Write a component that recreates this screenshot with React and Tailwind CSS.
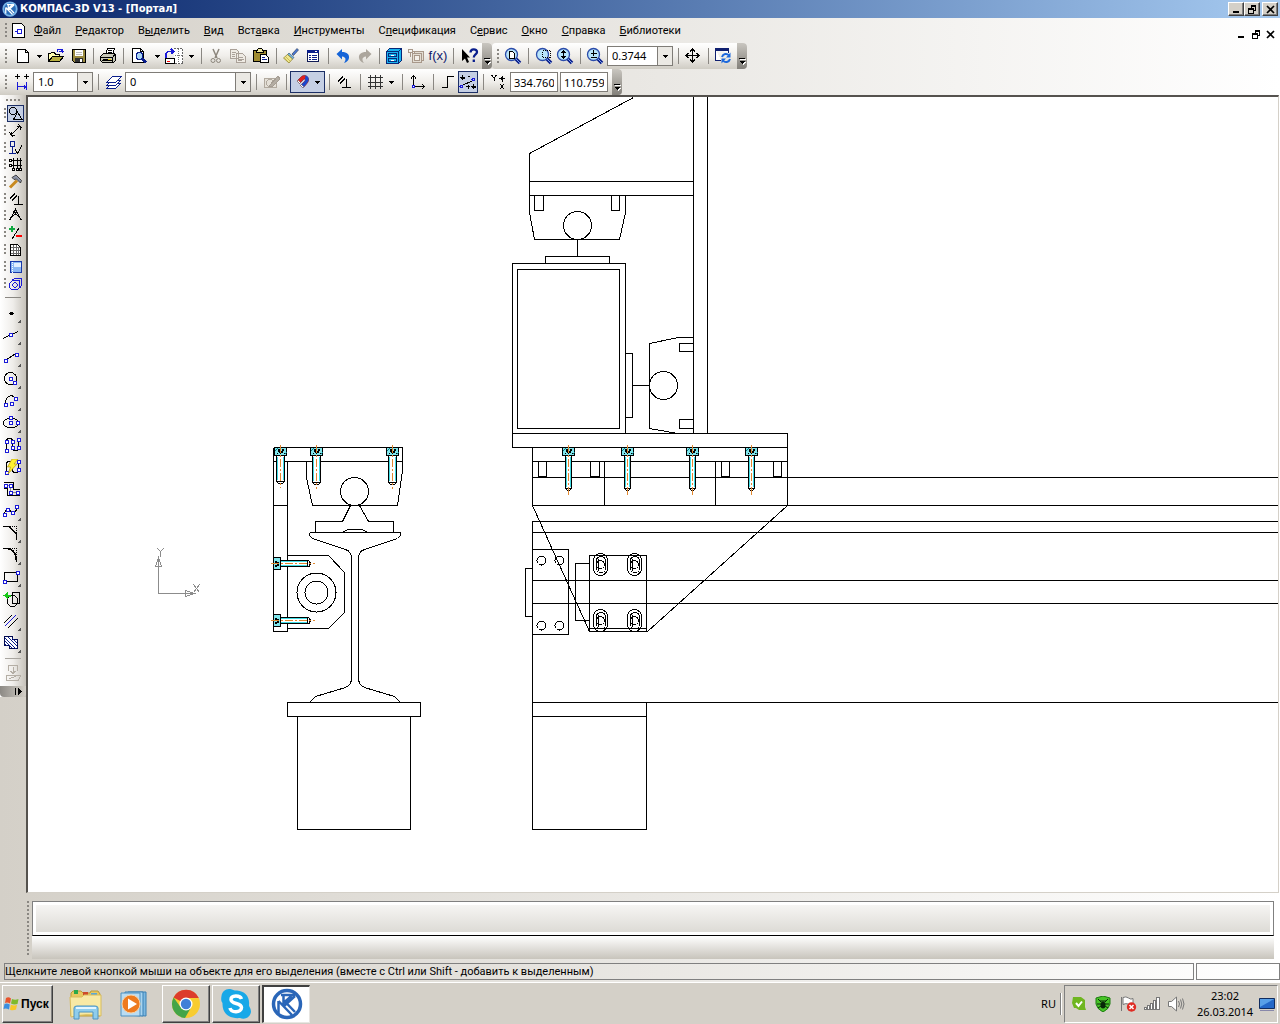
import React from "react";

const NAVY = "#0a1e8c";
const BLUE = "#1a1ad8";

function Ic({ w = 16, h = 16, smooth, children }) {
  return (
    <svg width={w} height={h} viewBox={`0 0 ${w} ${h}`} fill="none" stroke="#000" shapeRendering={smooth ? "auto" : "crispEdges"} aria-hidden="true" className="block shrink-0">
      {children}
    </svg>
  );
}

/* ---------- shared controls ---------- */
function Btn({ label, className = "w-[22px]", children }) {
  return (
    <button type="button" aria-label={label} className={`flex h-[22px] shrink-0 items-center justify-center ${className}`}>
      {children}
    </button>
  );
}
function Sep({ className = "w-2" }) {
  return (
    <span className={`flex shrink-0 justify-center ${className}`}>
      <span className="h-4 w-px bg-[#8a8782]" />
    </span>
  );
}
function Grip() {
  return (
    <span className="flex w-3 shrink-0 justify-center">
      <span className="h-[15px] w-[2px] bg-[repeating-linear-gradient(180deg,#8a8782_0_2px,transparent_2px_4px)]" />
    </span>
  );
}
function Down() {
  return (
    <svg width="5" height="3" viewBox="0 0 5 3" shapeRendering="crispEdges" aria-hidden="true">
      <path d="M0 0H5V1H4V2H3V3H2V2H1V1H0Z" />
    </svg>
  );
}
function Overflow() {
  return (
    <button type="button" aria-label="Параметры панели" className="flex h-[26px] w-[10px] shrink-0 items-end justify-center self-stretch rounded-r-sm bg-linear-to-b from-[#c9c6c0] to-[#83807a] pb-1">
      <svg width="7" height="7" viewBox="0 0 7 7" shapeRendering="crispEdges" aria-hidden="true">
        <path d="M1 1H7V2H1ZM2 4H7V5H6V6H5V7H4V6H3V5H2Z" fill="#fff" />
        <path d="M0 0H6V1H0ZM1 3H6V4H5V5H4V6H3V5H2V4H1Z" />
      </svg>
    </button>
  );
}
function Combo({ label, value, className }) {
  return (
    <span className={`relative flex h-5 shrink-0 ${className}`}>
      <select aria-label={label} defaultValue={value} className="w-full appearance-none border border-[#7f7c77] bg-white pl-1 text-[11px] leading-4 text-black">
        <option>{value}</option>
      </select>
      <span className="pointer-events-none absolute inset-y-0 right-0 flex w-4 items-center justify-center border border-[#7f7c77] bg-[#ebe9e4]">
        <Down />
      </span>
    </span>
  );
}

/* ---------- toolbar icons ---------- */
const NewDoc = () => (<Ic><path d="M2.5 1.5H10.5L13.5 4.5V14.5H2.5ZM10.5 1.5V4.5H13.5" fill="#fff" /></Ic>);
const Open = () => (
  <Ic><path d="M0.5 13.5V5.5H2.5L3.5 4.5H6.5L7.5 6.5H11.5V8.5" fill="#ffffb0" /><path d="M0.5 13.5L4.5 8.5H15.5L11.5 13.5Z" fill="#b8b040" /><path d="M9 3.5C10 0.500 13 0.500 14 3.500M11 3.500H15.500M14.500 1V5" stroke={BLUE} strokeWidth="1.500" /></Ic>
);
const Save = () => (
  <Ic><path d="M1.5 1.5H14.5V14.5H3.5L1.5 12.5Z" fill="#9a8a40" /><path d="M4 2H12V8H4Z" fill="#fff" stroke="none" /><path d="M5 4.5H11M5 6.500H11" stroke="#bbb" /><path d="M4 10H12V14H4Z" fill="#333" stroke="none" /><path d="M9 11H11V14H9Z" fill="#fff" stroke="none" /></Ic>
);
const Print = () => (
  <Ic><path d="M5.5 6.500L7.500 0.500H14.500L12.500 6.500" fill="#fff" /><path d="M8 2.500H12M7.500 4.500H11.500" /><path d="M0.500 8.500L3.500 5.500H14.500L15.500 7.500V12.500L13.500 14.500H2.500L0.500 12.500Z" fill="#c8c8b8" /><path d="M1 9.500H12.500L15 6.500M12.500 9.500V14M2 12.500H12M3 11.500H10" /><path d="M8 11.500H11" stroke="#e8d000" /></Ic>
);
const Preview = () => (
  <Ic><path d="M1.500 0.500H9.500L12.500 3.500V14.500H1.500ZM9.500 0.500V3.500H12.500" fill="#fff" /><circle cx="8.500" cy="8" r="3.500" fill="#a8d4f4" stroke={NAVY} /><path d="M11 10.500L15 14.500" stroke={NAVY} strokeWidth="2.500" /></Ic>
);
const PageMgr = () => (
  <Ic w={18}><path d="M8.500 0.500H17.500V15.500H10" fill="#fff" strokeDasharray="2 1" stroke="#666" /><path d="M13.500 1V15M10 7.500H17" stroke="#777" strokeDasharray="1 1" /><path d="M1 9.500V5.500Q2 3.500 4.500 3.500H8M6 1L8.500 3.500L6 6" stroke={BLUE} strokeWidth="1.500" /><path d="M0.500 10.500H9.500V15.500H0.500Z" fill="#fff" /><path d="M2 13.500H5" stroke="red" /></Ic>
);
const Cut = () => (
  <Ic smooth><path d="M5 1L9 10M11 1L7 10" stroke="#8c867c" strokeWidth="1.500" /><circle cx="5" cy="12.500" r="2" stroke="#8c867c" /><circle cx="10.500" cy="12.500" r="2" stroke="#8c867c" /></Ic>
);
const Copy = () => (
  <Ic><path d="M0.500 1.500H6.500L8.500 3.500V10.500H0.500ZM6.500 5.500H12.500L15.500 8.500V14.500H6.500Z" fill="#efebe4" stroke="#aaa198" /><path d="M2 4.500H6M2 6.500H5M2 8.500H5M8 9.500H13M8 11.500H14M8 12.500H12" stroke="#aaa198" /></Ic>
);
const Paste = () => (
  <Ic><path d="M0.500 2.500H13.500V13.500H0.500Z" fill="#a08c30" /><path d="M3.500 3.500L5.500 0.500H8.500L10.500 3.500V4.500H3.500Z" fill="#eee8a0" /><path d="M7.500 6.500H12.500L15.500 9.500V14.500H7.500Z" fill="#fff" /><path d="M9 9.500H12M9 11.500H14" stroke={NAVY} /></Ic>
);
const Brush = () => (
  <Ic smooth><path d="M9 6L14 0.500L15.500 2L10.500 7.500Z" fill="#4a78d8" stroke="#234" strokeWidth=".6" /><path d="M6 5L11 9.500L9.500 11L4.500 6.500Z" fill="#78b8e0" stroke="#246" strokeWidth=".6" /><path d="M4.500 6.500L9.500 11L6 15L0.500 10Z" fill="#f0e890" stroke="#887820" strokeWidth=".7" /><path d="M2.500 8.500L7 13M1.500 10L5 14" stroke="#b0a030" strokeWidth=".6" /></Ic>
);
const Props = () => (
  <Ic><path d="M2.500 2.500H13.500V13.500H2.500Z" fill="#fff" stroke="#111b55" /><path d="M2 2H14V5H2Z" fill={NAVY} stroke="none" /><path d="M4 7.500H6M7 7.500H12M4 9.500H6M7 9.500H12M4 11.500H6M7 11.500H12" stroke={NAVY} /><path d="M10 3.500H12" stroke="#fff" /></Ic>
);
const Undo = ({ gray }) => (
  <Ic smooth><g transform={gray ? "translate(16 0) scale(-1 1)" : undefined}><path d="M1.500 6L7 1V4C12 4 14.500 6.500 14 10C13.500 12.500 12 14 9 15C11 12.500 11.500 9 7 8.500V11.500Z" fill={gray ? "#aca69d" : "#1464d8"} stroke="none" /></g></Ic>
);
const Library = () => (
  <Ic><path d="M0.500 3.500L3.500 0.500H15.500V12.500L12.500 15.500H0.500Z" fill="#18b4f0" stroke="#082878" /><path d="M0.500 3.500H12.500V15M12.500 3.500L15 1M2.500 5.500H10.500V8.500H2.500ZM2.500 10.500H10.500V13.500H2.500Z" stroke="#082878" /><path d="M5 7H8M5 12H8" stroke="#fff" /></Ic>
);
const Tree = () => (
  <Ic><path d="M6.500 3.500H15.500V12.500H6.500Z" fill="#e3ddd3" stroke="#a8988a" /><path d="M4.500 5.500H13.500V14.500H4.500Z" fill="#e3ddd3" stroke="#a8988a" /><path d="M6.500 7.500H11.500V12.500H6.500Z" fill="#f4f0ea" stroke="#a8988a" /><circle cx="2.500" cy="3" r="2" stroke="#a8988a" /><path d="M4 3.500H6M2.500 5V9" stroke="#a8988a" /></Ic>
);
const Help = () => (
  <svg width="18" height="16" viewBox="0 0 18 16" aria-hidden="true"><path d="M1 1V13L4 10.500L6 15L8 14L6 9.500H9Z" /><path d="M9.500 4.500C9.500 0.500 16 0.500 16 4C16 6.500 12.800 6.500 12.800 9.500M12.800 11.500V14" fill="none" stroke={NAVY} strokeWidth="2.300" /></svg>
);
function Lens({ children }) {
  return (
    <Ic w={18} h={18} smooth><path d="M11 11L16 16" stroke={NAVY} strokeWidth="3.500" /><path d="M12 12L16 16" stroke="#7aa0e8" strokeWidth="1" /><circle cx="7.500" cy="7.500" r="6" fill="#b8e4fa" stroke="#2b4caa" strokeWidth="1.300" /><g shapeRendering="crispEdges">{children}</g></Ic>
  );
}
const Move = () => (
  <Ic><path d="M7.500 1V15M1 7.500H15M5 3.500L7.500 1L10 3.500M5 11.500L7.500 14L10 11.500M3.500 5L1 7.500L3.500 10M11.500 5L14 7.500L11.500 10" /></Ic>
);
const Refresh = () => (
  <Ic><path d="M0.500 0.500H13.500V5M0.500 0.500V12.500H6" stroke="#102070" fill="#fff" /><path d="M0 0H14V3H0Z" fill="#102070" stroke="none" /><g shapeRendering="auto"><path d="M7 9C8 5.500 12 5 14 7.500M15 11C14 14.500 10 15 8 12.500" stroke="#1c68dc" strokeWidth="2" /><path d="M15.500 4.500V9.500H11ZM6.500 15.500V10.500H11Z" fill="#1c68dc" stroke="none" /></g></Ic>
);
const ScaleIcon = () => (
  <Ic w={17}><path d="M1 2.500H6M3.500 0V5M10 2.500H15M12.500 0V5" /><path d="M2 2H5V3H2ZM11 2H14V3H11Z" fill="#000" stroke="none" /><path d="M3.500 8V16M12.500 8V16M4 12.500H12M10 10.500V14.500M11 11.500V13.500" stroke={BLUE} /></Ic>
);
const Layers = () => (
  <Ic w={18}><path d="M1.500 14.500L6.500 9.500H15.500L10.500 14.500Z" fill="#fff" stroke={NAVY} /><path d="M1.500 11.500L6.500 6.500H15.500L10.500 11.500Z" fill="#fff" stroke={NAVY} /><path d="M1.500 8.500L7.500 2.500H16.500L10.500 8.500Z" fill="#fff" stroke={NAVY} /></Ic>
);
const EditGray = () => (
  <Ic><path d="M0.500 4.500H12.500V13.500H0.500Z" fill="#e5e0d7" stroke="#b1a99e" /><circle cx="6" cy="9" r="3.500" stroke="#b1a99e" /><path d="M5 12L14 2L16 5L8 13Z" fill="#b4ada3" stroke="#a49c92" /></Ic>
);
const Magnet = () => (
  <Ic smooth><path d="M2 7L6.500 2.500C9 0 14 2 13.500 6C13.500 8 12 9.500 8 14L5.500 11.500L10 7C11 5.500 10 4.500 8.500 5.500L4.500 9.500Z" fill="#e02020" stroke="#600" strokeWidth=".5" /><path d="M10.500 1.500C13 2 14 4 13.500 6.500C13 8 11 10.500 8 14L5.500 11.500L10 7C10.500 6 10.500 5.500 10 5Z" fill="#1848d0" stroke="none" /><path d="M2 7L4.500 9.500L5.500 8.500L3 6ZM5.500 11.500L8 14L9 13L6.500 10.500Z" fill="#fff" stroke="#444" strokeWidth=".4" /></Ic>
);
const Perp = () => (
  <Ic><path d="M2 7.500L7 2.500M4 9.500L9 4.500M10.500 5V13.500M6 13.500H15" /></Ic>
);
const GridIcon = () => (<Ic><path d="M3.500 1V15M8.500 1V15M13.500 1V15M1 3.500H16M1 8.500H16M1 12.500H16" stroke="#333" /></Ic>);
const Axes = () => (<Ic><path d="M3.500 2V12.500H14M1 4.500L3.500 1.500L6 4.500M12 10L14.500 12.500L12 15" /><path d="M2.500 11.500H4.500V13.500H2.500Z" fill="#fff" stroke={BLUE} /></Ic>);
const Step = () => (<Ic><path d="M2 13.500H7.500V2.500H14" /></Ic>);
const SnapIcon = () => (
  <Ic w={18}><path d="M1 3.500H6M3.500 1V6M3 11.500L14 6.500M12 12.500H17M14.500 10V15M7 12.500H11M9 10.500V14.500M9 2.500H11" /><circle cx="2.500" cy="12.500" r="1.500" stroke={BLUE} /><circle cx="14.500" cy="5.500" r="1.500" stroke={BLUE} /><path d="M2 3H5V4H2ZM13 12H16V13H13Z" fill="#000" /></Ic>
);
const YX = () => (
  <Ic><path d="M0.500 1L3 4M5.500 1L3 4M3 4V7M8 4.500H14M11 1.500V7.500M9 10L13 15M13 10L9 15" /><circle cx="11" cy="4.500" r="1.200" fill="#000" /></Ic>
);

/* ---------- left palette ---------- */
const Sq = ({ x, y }) => <rect x={x - 1} y={y - 1} width="3" height="3" fill="#fff" stroke={BLUE} transform="translate(-.5 -.5)" />;
const topTools = [
  ["Геометрия", <><circle cx="5" cy="5" r="3.500" /><path d="M9.500 6L14 13.500H5.500Z" /></>],
  ["Размеры", <><path d="M3 12L12 3M3 9V12.500H6.500M8.500 3H12.500V6.500M1 9L5 14M10 1L14 5" /></>],
  ["Обозначения", <><path d="M2.500 1.500H6.500V6.500H2.500ZM4.500 7V13M1 13.500H8" stroke={NAVY} /><path d="M7 9.500L9.500 13.500L14 5.500" /></>],
  ["Обозначения для строительства", <><path d="M5.500 1V11M9.500 1V11M12.500 1V11M3 3.500H14M3 8.500H14" /><path d="M1.500 2.500H3.500V4.500H1.500ZM1.500 7.500H3.500V9.500H1.500ZM4.500 11.500H6.500V13.500H4.500ZM8.500 11.500H10.500V13.500H8.500ZM11.500 11.500H13.500V13.500H11.500Z" fill="#fff" /></>],
  ["Редактирование", <g shapeRendering="auto"><path d="M2 13.500L9 6.500" stroke="#c88a20" strokeWidth="3" /><path d="M4 3.500L8 1L13.500 6.500L12.500 9L8.500 5L6 5.500Z" fill="#8d94a8" stroke="#222" strokeWidth=".8" /></g>],
  ["Параметризация", <path d="M2 7.500L7 2.500M4 9.500L9 4.500M10.500 5V13.500M6 13.500H15" />],
  ["Измерения", <><path d="M6.500 3L1.500 12.500M8.500 3L13.500 12.500M7.500 0V3M3 9L7.500 6L12 9" /><circle cx="7.500" cy="3.500" r="1.500" /></>],
  ["Выделение", <><path d="M1 4H7M4 1V7" stroke="#10a840" strokeWidth="2" /><path d="M4 14L11 3" /><path d="M8 11H14" stroke="red" strokeWidth="2" /></>],
  ["Ассоциативные виды", <><path d="M2.500 2.500H9.500L12.500 5.500V13.500H2.500Z" fill="#fff" /><path d="M5.500 3V13M8.500 3V13M10.500 5V13M3 5.500H12M3 8.500H12M3 11.500H12" stroke="#666" /></>],
  ["Спецификация", <><path d="M2.500 2.500H13.500V13.500H2.500Z" fill="#8cb8f4" stroke="#1838a8" /><path d="M6 4H13V8H6Z" fill="#e4f0fe" stroke="none" /><path d="M4.500 3V14" stroke="#fff" strokeDasharray="1 1" /></>],
  ["Отчеты", <><path d="M4 4.500L6.500 2.500H13.500V9.500L12 11.500M1.500 11.500V7.500L4.500 4.500H11.500V11.500L9.500 13.500H3.500Z" stroke={BLUE} /><circle cx="7" cy="9" r="2.200" stroke={BLUE} /></>],
];
const lowTools = [
  ["Точка", 1, <path d="M7 7H10V8H11V9H10V10H7V9H6V8H7Z" fill="#000" stroke="none" />],
  ["Вспомогательная прямая", 1, <><path d="M0 11.500L15 4.500" /><Sq x={7.5} y={8} /></>],
  ["Отрезок", 1, <><path d="M2 11.500L13 4.500" /><Sq x={2.5} y={11.5} /><Sq x={13.5} y={5.5} /></>],
  ["Окружность", 1, <><circle cx="7.500" cy="7.500" r="6" /><Sq x={8} y={8} /><Sq x={12} y={12} /></>],
  ["Дуга", 1, <><path d="M2.500 11C2 3 9 0 13 6" /><Sq x={2.5} y={11.5} /><Sq x={8.5} y={10.5} /><Sq x={13} y={5.5} /></>],
  ["Эллипс", 1, <><ellipse cx="8" cy="8" rx="7.500" ry="5" /><Sq x={8} y={8} /><Sq x={8} y={3} /><Sq x={14.500} y={8} /></>],
  ["Непрерывный ввод объектов", 0, <><path d="M3.500 13V3.500C4 0.500 9 0.500 9.500 4V11C10 14.500 15 14.500 15.500 11V3" /><Sq x={4} y={14} /><Sq x={4} y={5} /><Sq x={10} y={5} /><Sq x={16} y={3} /><Sq x={10} y={11} /><Sq x={16} y={11} /></>],
  ["Линия", 0, <><path d="M3.500 13V4.500C4 1.500 9 1.500 9.500 5V11C10 14.500 15 14.500 15.500 11V3" /><Sq x={4} y={14} /><Sq x={16} y={3} /><Sq x={16} y={11} /><g shapeRendering="auto"><path d="M9 0H15L11 5H14L5 15L7.500 8H4.500Z" fill="#fff030" stroke="#b89800" strokeWidth=".7" /></g></>],
  ["Мультилиния", 0, <><path d="M1 1.500H10.500V8.500H17M1 7.500H4.500V14.500H17" /><path d="M2 4.500H7.500V11.500H16" stroke="#888" /><Sq x={3} y={5} /><Sq x={8} y={5} /><Sq x={8} y={12} /><Sq x={15} y={12} /></>],
  ["Кривая", 1, <><path d="M1.500 13C2 4 6 4 8 9C11 12 14 8 14 3" /><Sq x={2} y={12} /><Sq x={5} y={7} /><Sq x={10} y={10} /><Sq x={14} y={4} /></>],
  ["Фаска", 1, <><path d="M0 1.500H6L13.500 9V15" strokeWidth="1.500" /><path d="M7 1.500H13.500V9" strokeDasharray="1 1" /></>],
  ["Скругление", 1, <><path d="M0 1.500H4C10 2 13.500 6 13.500 15" strokeWidth="1.500" /><path d="M7 1.500H13.500V9" strokeDasharray="1 1" /></>],
  ["Прямоугольник", 1, <><path d="M1.500 3.500H14.500V12.500H1.500Z" /><Sq x={2} y={13} /><Sq x={15} y={4} /></>],
  ["Собрать контур", 0, <><path d="M9.500 1.500H16.500V12.500H9.500Z" /><circle cx="9.500" cy="10" r="5.500" /><path d="M2 4.500H8M5 2L2 4.500L5 7" stroke="#18c818" strokeWidth="2" /></>],
  ["Эквидистанта", 1, <><path d="M1 10L9 2M5 15L15 5" /><path d="M2 13L13 2" stroke={BLUE} /></>],
  ["Штриховка", 1, <><path d="M1.500 1.500H9.500V4.500H14.500V13.500H6.500V10.500H1.500Z" fill="#fff" stroke="#000850" strokeWidth="1.500" /><path d="M2 3L13 14M2 6L9 13M5 2L14 11M9 3L14 8M2 9L4 11" stroke={NAVY} /></>],
];

/* ---------- drawing ---------- */
function VBolt({ x, len, half = 4 }) {
  return (
    <g transform={`translate(${x} 447)`}>
      <rect x="-6" y="0" width="12" height="8" fill="#7fe6ec" />
      <path d="M-6 4L-3 1M4 7L6 5" stroke="#087a84" />
      <path d="M-2 1V4L0 6L2 4V1M-3 6H-4M3 6H4M-4 8H4" strokeWidth="1" />
      <path d="M-3 2H-1M1 2H3M-2 4H2" strokeWidth="2" />
      <path d={`M${-half} 8V${len - 2}L${-half + 2} ${len}H${half - 2}L${half} ${len - 2}V8`} fill="#fff" />
      <rect x={-half + 0.5} y="9.500" width="1" height={len - 13} fill="#3fdde4" stroke="none" />
      <rect x={half - 1.5} y="9.500" width="1" height={len - 13} fill="#3fdde4" stroke="none" />
      <path d={`M${-half} ${len - 2}H${half}`} />
      <path d={`M0 -3V${len + 4}`} stroke="#e08830" strokeDasharray="8 2 2 2" />
    </g>
  );
}
function HBolt({ y }) {
  return (
    <g transform={`translate(273 ${y})`}>
      <rect x="0" y="-6" width="7" height="12" fill="#7fe6ec" />
      <path d="M1 -2H3L5 0L3 2H1" />
      <path d="M2 -3V-1M2 1V3M4 -2V2" strokeWidth="2" />
      <path d="M7 -3H35L37 -1V1L35 3H7Z" fill="#fff" />
      <rect x="7.500" y="-2.500" width="26" height="1" fill="#3fdde4" stroke="none" />
      <rect x="7.500" y="1.500" width="26" height="1" fill="#3fdde4" stroke="none" />
      <path d="M34 -3V3M36 -3V3" />
      <path d="M-3 0H41" stroke="#e08830" strokeDasharray="8 2 2 2" />
    </g>
  );
}
function Slot({ x, y }) {
  return (
    <g>
      <rect x={x - 7} y={y - 11} width="14" height="22" rx="7" />
      <rect x={x - 4} y={y - 8} width="9" height="16" rx="4" />
      <circle cx={x} cy={y} r="4" />
      <path d={`M${x - 2} ${y - 6}V${y + 6}`} />
    </g>
  );
}
const outlines = [
  // gantry post and upper bracket
  "M633 97L529 153V212L534 239H619L625 212V195M529 181H693M529 195H693M693 90V433M707 90V433",
  "M534 195V210H543V195M611 195V210H619V195M577 239V256M545 263V256H609V263",
  "M512 263H625V433H512ZM517 269H619V428H517ZM625 353H632V417H625M632 385H649",
  "M693 337H678L649 343V428L677 433M693 343H679V351H693M693 419H679V428H693",
  // carriage
  "M512 433H787V447H512ZM532 447V505H787V447M532 461H787M532 477H4000M787 505H4000M604 461V505M715 461V505",
  "M538 461V476H546V461M590 461V476H599V461M721 461V476H729V461M773 461V476H781V461",
  "M532 505L589 631H647L787 505",
  // beam
  "M4000 521H532V829H646V702M532 532H4000M532 580H4000M532 603H4000M532 702H4000M532 716H646",
  "M532 549H568V634H532M532 568H525V616H532M589 563H575V620H589M589 631V555H646V631M589 628H646",
  // rail section
  "M273 447H402V470L397 505H312L306 477V461M273 461H402M273 447V631H287V461M273 505H287",
  "M350 505L342 521H315V532M359 505L368 521H393V532M342 532L347 529H362L367 532",
  "M309 532H400V535L397 538L364 549Q358 551 358 558V678Q358 684 364 687L394 696L400 702M309 532V535L312 538L345 549Q351 551 351 558V678Q351 684 345 687L315 696L309 702",
  "M287 702H420V716H287ZM297 716V829H410V716",
  "M287 555H328L344 572V612L328 628H287",
];
function Drawing() {
  return (
    <svg role="img" aria-label="Чертёж портала" className="min-h-[740px] w-full flex-1 bg-white" fill="none" stroke="#000" shapeRendering="crispEdges">
      <g transform="translate(-27.5 -96.5)">
        {outlines.map((d) => <path key={d} d={d} />)}
        <circle cx="577" cy="225" r="14" />
        <circle cx="663" cy="385" r="14" />
        <circle cx="354" cy="491" r="14" />
        <circle cx="316" cy="592" r="19.500" />
        <circle cx="316" cy="592" r="11.500" />
        {[[541, 560], [559, 560], [541, 625], [559, 625]].map(([x, y]) => <circle key={x + "-" + y} cx={x} cy={y} r="4.500" />)}
        {[[600, 564], [634, 564], [600, 620], [634, 620]].map(([x, y]) => <Slot key={x + "-" + y} x={x} y={y} />)}
        <VBolt x={280} len={36} />
        <VBolt x={316} len={37} />
        <VBolt x={392} len={37} />
        {[568, 627, 692, 751].map((x) => <VBolt key={x} x={x} len={43} half={3} />)}
        <HBolt y={563} />
        <HBolt y={620} />
        <g stroke="#8c8c8c">
          <path d="M158 557V593H194M158 557L155 566H161ZM194 593L185 590V596Z" />
          <path d="M157 548L160 551L163 548M160 551V556M193 584L199 592M199 584L193 592" />
        </g>
      </g>
    </svg>
  );
}

/* ---------- logos ---------- */
function Kompas({ size, ring = "#2a66b8", bg = "none", ink = "#2a66b8" }) {
  return (
    <svg width={size} height={size} viewBox="0 0 32 32" aria-hidden="true" className="block shrink-0">
      <circle cx="16" cy="16" r="13.500" fill={bg} stroke={ring} strokeWidth="3.500" />
      <path d="M10 7H24M12.500 7V17M20.500 8L14 13.500L24 24M7.500 13V25M7.500 13L21 27M13 18L24 8" fill="none" stroke={ink} strokeWidth="2.500" />
    </svg>
  );
}
const WinFlag = () => (
  <svg width="16" height="16" viewBox="0 0 16 16" aria-hidden="true">
    <path d="M3 2Q5.500 0.500 8 2.500L7 7.500Q4.500 6 2 7Z" fill="#e8542c" /><path d="M9 3Q12 4.500 15.500 3L14.500 8Q11 9 8 7.500Z" fill="#7fba2c" />
    <path d="M1.500 8Q4 7 6.800 8.500L6 13.500Q3 12 0.500 13Z" fill="#3a8ee0" /><path d="M7.800 8.800Q11 10 14 9L13 13.500Q10 15 7 13.800Z" fill="#f8c828" />
  </svg>
);
const Explorer = () => (
  <svg width="34" height="32" viewBox="0 0 34 32" aria-hidden="true">
    <path d="M2 5L4 3H12L14 5H21L22 3H29L31 6V28H2Z" fill="#e9c860" stroke="#b99a3a" /><path d="M5 2H9V6H5Z" fill="#2ba84a" /><path d="M14 4H19V7H14Z" fill="#cf4a2a" /><path d="M22 5H28V8H22Z" fill="#5aa8d8" />
    <path d="M1 9H13L15 7H32V28Q17 25 2 29Z" fill="#f8e9a4" stroke="#d8bc5c" /><path d="M5 31V20Q5 18 8 18H26Q29 18 29 20V31H24V24H10V31Z" fill="#8fcdec" stroke="#4c94c4" /><path d="M7 20H27" stroke="#e4f6ff" strokeWidth="2" />
  </svg>
);
const Player = () => (
  <svg width="30" height="28" viewBox="0 0 30 28" aria-hidden="true">
    <path d="M8 2H26V26L8 25Z" fill="#7db8e0" stroke="#3a80b4" /><path d="M5 2H23V26L5 25Z" fill="#a8d4f0" stroke="#3a80b4" /><path d="M1 3H20V26H1Z" fill="#b9dcf2" stroke="#4c90c0" />
    <circle cx="11" cy="14" r="9" fill="#ee7a1e" stroke="#fbd0a0" /><path d="M8 8.500L17 14L8 19.500Z" fill="#fff" />
  </svg>
);
const Chrome = () => (
  <svg width="30" height="30" viewBox="0 0 30 30" aria-hidden="true">
    <circle cx="15" cy="15" r="14" fill="#f8cc30" /><path d="M15 15L2.500 8.500A14 14 0 0 1 27.800 9H15Z" fill="#dc3c2c" /><path d="M2.600 8.500A14 14 0 0 0 14 29L20 18.500L9.500 18Z" fill="#44a548" />
    <circle cx="15" cy="15" r="6.500" fill="#fff" /><circle cx="15" cy="15" r="5.200" fill="#3f7fd8" />
  </svg>
);
const Skype = () => (
  <svg width="32" height="32" viewBox="0 0 32 32" aria-hidden="true">
    <path d="M9 1C13 1 13 3 17 2.500C25 3 30 9 29 17C29 19 31 20 31 24C30 30 24 32 20 30C10 31 2 26 2.500 15C1 13 1 11 1.500 8C2 4 5 1 9 1Z" fill="#18a8e8" />
    <path d="M21.500 11C20 7 11 7 11 11.500C11 16.500 21.500 14.500 21.500 19.500C21.500 25 11 25 10 20" fill="none" stroke="#fff" strokeWidth="3.500" />
  </svg>
);

const menus = [
  ["", "Ф", "айл"], ["", "Р", "едактор"], ["В", "ы", "делить"], ["", "В", "ид"], ["Вст", "а", "вка"], ["", "И", "нструменты"],
  ["С", "п", "ецификация"], ["С", "е", "рвис"], ["", "О", "кно"], ["", "С", "правка"], ["", "Б", "иблиотеки"],
];

const MinG = () => <Ic w={9} h={9}><path d="M1 7H7" strokeWidth="2" /></Ic>;
const RestG = () => <Ic w={9} h={9}><path d="M3 1H8M3.500 2V3M7.500 1V5.500H6M0 4H6M0.500 4V8.500H5.500V4" /><path d="M3 0.500H8M0 3.500H6" /></Ic>;
const CloseG = () => <Ic w={9} h={9} smooth><path d="M1 1L8 8M8 1L1 8" strokeWidth="1.700" /></Ic>;

const raised = "border border-t-white border-l-white border-r-[#404040] border-b-[#404040] shadow-[inset_-1px_-1px_0_#808080]";

export default function App() {
  return (
    <div className="flex min-h-screen flex-col bg-linear-to-r from-[#d4d0c8] to-white font-['Noto_Sans','Liberation_Sans',sans-serif] text-[11px] leading-4 text-black">
      <header className="flex h-[18px] items-center bg-linear-to-r from-[#0a246a] to-[#a6caf0] pr-[2px] pl-[2px]">
        <Kompas size={16} ring="#78b4e8" bg="#2a6cb8" ink="#fff" />
        <h1 className="ml-[2px] flex-1 truncate font-['DejaVu_Sans',sans-serif] text-[10px] font-bold text-white">КОМПАС-3D V13 - [Портал]</h1>
        <button type="button" aria-label="Свернуть" className={`flex h-[14px] w-4 items-center justify-center bg-[#d4d0c8] ${raised}`}><MinG /></button>
        <button type="button" aria-label="Восстановить" className={`flex h-[14px] w-4 items-center justify-center bg-[#d4d0c8] ${raised}`}><RestG /></button>
        <button type="button" aria-label="Закрыть" className={`ml-[2px] flex h-[14px] w-4 items-center justify-center bg-[#d4d0c8] ${raised}`}><CloseG /></button>
      </header>

      <nav aria-label="Меню" className="flex h-[25px] items-center pr-1">
        <Grip />
        <Ic w={13} h={15}><path d="M0.500 0.500H9.500L12.500 3.500V14.500H0.500Z" fill="#fff" /><path d="M3 8.500H5M5.500 6.500H9.500V10.500H5.500Z" stroke={BLUE} /></Ic>
        <div className="ml-[2px] flex flex-1 font-['Roboto','Liberation_Sans',sans-serif]">
          {menus.map(([a, u, b]) => (
            <button type="button" key={a + u + b} className="px-[7px]">{a}<span className="underline">{u}</span>{b}</button>
          ))}
        </div>
        <button type="button" aria-label="Свернуть документ" className="flex w-[14px] justify-center pt-2"><MinG /></button>
        <button type="button" aria-label="Восстановить документ" className="flex w-[16px] justify-center pt-2"><RestG /></button>
        <button type="button" aria-label="Закрыть документ" className="flex w-[12px] justify-center pt-2"><CloseG /></button>
      </nav>

      <div className="flex h-[26px]">
        <div className="flex items-center rounded-r-sm bg-linear-to-b from-white via-[#f0eeea] to-[#cfccc4]">
          <Grip />
          <Btn label="Создать"><NewDoc /></Btn>
          <Btn label="Варианты создания" className="w-[10px]"><Down /></Btn>
          <Btn label="Открыть" className="w-[23px]"><Open /></Btn>
          <Btn label="Сохранить" className="w-[23px]"><Save /></Btn>
          <Sep className="w-[6px]" />
          <Btn label="Печать" className="w-6"><Print /></Btn>
          <Sep className="w-[6px]" />
          <Btn label="Предварительный просмотр" className="w-[26px]"><Preview /></Btn>
          <Btn label="Варианты просмотра" className="w-[10px]"><Down /></Btn>
          <Btn label="Менеджер документа" className="w-6"><PageMgr /></Btn>
          <Btn label="Варианты менеджера" className="w-[10px]"><Down /></Btn>
          <Sep className="w-[10px]" />
          <Btn label="Вырезать" className="w-5"><Cut /></Btn>
          <Btn label="Копировать" className="w-6"><Copy /></Btn>
          <Btn label="Вставить"><Paste /></Btn>
          <Sep />
          <Btn label="Копировать свойства"><Brush /></Btn>
          <Btn label="Свойства"><Props /></Btn>
          <Sep />
          <Btn label="Отменить"><Undo /></Btn>
          <Btn label="Повторить" className="w-[21px]"><Undo gray /></Btn>
          <Sep />
          <Btn label="Менеджер библиотек"><Library /></Btn>
          <Btn label="Дерево"><Tree /></Btn>
          <Btn label="Переменные" className="w-[22px] font-['Liberation_Sans',sans-serif] text-[13px] text-[#10206c]">f(x)</Btn>
          <Sep />
          <Btn label="Справка" className="w-[25px]"><Help /></Btn>
          <Overflow />
        </div>
        <div className="flex items-center rounded-sm bg-linear-to-b from-white via-[#f0eeea] to-[#cfccc4]">
          <Grip />
          <Btn label="Показать все" className="w-[18px]"><Lens><path d="M5.500 4.500H8.500L10.500 6.500V11.500H5.500Z" fill="#fff" /></Lens></Btn>
          <Sep className="w-3" />
          <Btn label="Увеличить рамкой" className="w-[20px]"><Lens><path d="M7.500 3.500H15.500V10.500H7.500Z" strokeDasharray="1 1" /></Lens></Btn>
          <Btn label="Масштаб динамически"><Lens><path d="M7.500 3V12M6 4.500H9M6 10.500H9M5 5.500H10M5 9.500H10" /></Lens></Btn>
          <Sep />
          <Btn label="Изменить масштаб" className="mr-[2px] w-[21px]"><Lens><path d="M7.500 3V9M4.500 6H10.500M4.500 10.500H10.500" /></Lens></Btn>
          <Combo label="Масштаб" value="0.3744" className="w-[66px]" />
          <Sep className="w-[10px]" />
          <Btn label="Сдвинуть" className="w-[19px]"><Move /></Btn>
          <Sep className="w-3" />
          <Btn label="Обновить" className="mr-[5px] w-[18px]"><Refresh /></Btn>
          <Overflow />
        </div>
      </div>

      <div className="flex h-[26px]">
        <div className="flex h-[26px] items-center rounded-r-sm bg-linear-to-b from-white via-[#f0eeea] to-[#cfccc4]">
          <Grip />
          <Btn label="Шаг курсора" className="w-[21px]"><ScaleIcon /></Btn>
          <Combo label="Текущий шаг" value="1.0" className="w-[60px]" />
          <Sep className="w-[10px]" />
          <Btn label="Слои"><Layers /></Btn>
          <Combo label="Текущий слой" value="0" className="w-[126px]" />
          <Sep className="w-[10px]" />
          <Btn label="Редактировать" className="w-[21px]"><EditGray /></Btn>
          <Sep />
          <Btn label="Привязки" className="w-[35px] gap-1 border border-[#1c2f66] bg-[#c5cfe4]"><Magnet /><Down /></Btn>
          <Sep />
          <Btn label="Ортогональность"><Perp /></Btn>
          <Sep className="w-[10px]" />
          <Btn label="Сетка" className="w-5"><GridIcon /></Btn>
          <Btn label="Варианты сетки" className="w-3"><Down /></Btn>
          <Sep className="w-[10px]" />
          <Btn label="Система координат"><Axes /></Btn>
          <Sep />
          <Btn label="Ортогональное черчение" className="w-[21px]"><Step /></Btn>
          <Btn label="Округление" className="border border-[#1c2f66] bg-[#c5cfe4]"><SnapIcon /></Btn>
          <Sep className="w-[10px]" />
          <span className="flex w-[22px] justify-center"><YX /></span>
          <input aria-label="Координата X" defaultValue="334.7603" className="h-5 w-12 border border-[#7f7c77] bg-white px-[3px]" />
          <input aria-label="Координата Y" defaultValue="110.7590" className="mr-1 ml-[2px] h-5 w-12 border border-[#7f7c77] bg-white px-[3px]" />
          <Overflow />
        </div>
      </div>

      <main className="flex flex-1">
        <aside aria-label="Компактная панель" className="w-[26px] shrink-0">
          <div className="flex flex-col bg-linear-to-r from-white via-[#efedea] to-[#c6c2ba]">
            <span className="mx-auto mt-1 mb-1 h-[2px] w-[15px] bg-[repeating-linear-gradient(90deg,#8a8782_0_2px,transparent_2px_4px)]" />
            {topTools.map(([label, art], i) => (
              <div key={label} className="flex h-[17px] items-center">
                <span className="mr-[1px] ml-[4px] h-[11px] w-[2px] shrink-0 bg-[repeating-linear-gradient(180deg,#8a8782_0_2px,transparent_2px_4px)]" />
                <button type="button" aria-label={label} className={i === 0 ? "flex h-[17px] w-[17px] items-center justify-center border border-[#1c2f66] bg-[#c5cfe4]" : "flex h-[17px] w-[17px] items-center justify-center"}>
                  <Ic w={15} h={15}>{art}</Ic>
                </button>
              </div>
            ))}
            <span className="mx-[5px] my-[5px] h-px bg-[#8a8782]" />
            {lowTools.map(([label, more, art]) => (
              <button type="button" key={label} aria-label={label} className="flex h-[22px] items-center pl-[3px]">
                <Ic w={19} h={18}>{art}{more ? <path d="M18 14V18H14Z" fill="#555" stroke="none" /> : null}</Ic>
              </button>
            ))}
            <span className="mx-[5px] my-[3px] h-px bg-[#a8a59f]" />
            <button type="button" aria-label="Вид" className="flex h-[22px] items-center pl-[5px]">
              <Ic w={17} h={18}><path d="M3.500 7V1.500H12.500V7M8 3V9M5.500 7L8 9.500L10.500 7M1.500 11.500H15.500L13.500 16.500H1.500ZM4 14.500L11 12.500" stroke="#b4aea5" /></Ic>
            </button>
            <button type="button" aria-label="Параметры компактной панели" className="mt-[2px] flex h-[11px] items-center justify-end rounded-b-sm bg-linear-to-r from-[#8c8984] to-[#d4d0c8] pr-1">
              <svg width="7" height="7" viewBox="0 0 7 7" shapeRendering="crispEdges" aria-hidden="true"><path d="M0 0H1V7H0ZM3 0H4V1H5V2H6V3H7V4H6V5H5V6H4V7H3Z" /></svg>
            </button>
          </div>
        </aside>
        <section className="mr-px flex flex-1 border-t-[2px] border-r border-b border-l-[2px] border-t-[#55524e] border-r-[#d4d0c8] border-b-[#d4d0c8] border-l-[#55524e]">
          <Drawing />
        </section>
      </main>

      <section aria-label="Панель свойств" className="mt-2 mr-[6px] ml-[27px] flex h-[58px]">
        <span className="mr-[3px] h-[55px] w-[2px] bg-[repeating-linear-gradient(180deg,#8a8782_0_2px,transparent_2px_4px)]" />
        <div className="flex-1">
          <div className="h-[35px] border border-[#808080] border-b-black bg-white p-[3px]">
            <div className="h-full bg-linear-to-b from-[#f6f5f3] to-[#dddbd6]" />
          </div>
          <div className="h-[23px] bg-linear-to-b from-white to-[#c8c4bc]" />
        </div>
      </section>

      <footer className="mt-1 flex h-[17px] gap-[2px] pl-1">
        <p className="flex flex-1 items-center border border-[#808080] font-['Roboto','Liberation_Sans',sans-serif]">Щелкните левой кнопкой мыши на объекте для его выделения (вместе с Ctrl или Shift - добавить к выделенным)</p>
        <span className="w-[84px] border border-[#808080]" />
      </footer>

      <div className="mt-[2px] flex h-[42px] items-center border-t border-white bg-[#d4d0c8] pr-[2px] pl-[2px]">
        <button type="button" className={`flex h-[38px] w-[51px] items-center gap-[2px] font-['Liberation_Sans',sans-serif] text-xs font-bold ${raised}`}><WinFlag />Пуск</button>
        <button type="button" aria-label="Проводник" className="ml-[9px] flex h-[38px] w-12 items-center justify-center"><Explorer /></button>
        <button type="button" aria-label="Проигрыватель" className="mr-[2px] flex h-[38px] w-[50px] items-center justify-center"><Player /></button>
        <button type="button" aria-label="Chrome" className={`mr-[2px] flex h-[38px] w-12 items-center justify-center ${raised}`}><Chrome /></button>
        <button type="button" aria-label="Skype" className={`mr-[2px] flex h-[38px] w-12 items-center justify-center ${raised}`}><Skype /></button>
        <button type="button" aria-label="КОМПАС-3D" className="flex h-[38px] w-12 items-center justify-center border-t-2 border-r border-b border-l-2 border-t-[#404040] border-r-[#e8e6e2] border-b-[#e8e6e2] border-l-[#404040] bg-white"><Kompas size={32} /></button>
        <span className="ml-auto pr-1">RU</span>
        <span className="mr-[2px] h-[22px] w-[2px] border-r border-l border-r-white border-l-[#808080]" />
        <div className="flex h-[38px] items-center border border-t-[#808080] border-r-white border-b-white border-l-[#808080] pr-px pl-[6px]">
          <span className="flex w-6 shrink-0 items-center">
            <svg width="16" height="16" viewBox="0 0 16 16" aria-hidden="true"><path d="M2 1H10L14 4V11L15 14H8L5 12H3L1 7Z" fill="#6fb620" /><path d="M5 7L7.500 10L11 5.500" fill="none" stroke="#fff" strokeWidth="2" /></svg>
          </span>
          <span className="flex w-[25px] shrink-0 items-center">
            <svg width="16" height="16" viewBox="0 0 16 16" aria-hidden="true"><path d="M8 0L15 2V8Q14 13 8 16Q2 13 1 8V2Z" fill="#48c428" stroke="#1c7c10" /><ellipse cx="8" cy="9" rx="2.500" ry="3.500" fill="#082808" /><path d="M3 3L6 6M13 3L10 6M2 8H14M3 12L6 10M13 12L10 10M5 5H11" stroke="#082808" strokeWidth="1" /></svg>
          </span>
          <span className="flex w-6 shrink-0 items-center">
            <svg width="17" height="16" viewBox="0 0 17 16" aria-hidden="true"><path d="M1.500 1V15M3 1.500Q6 0 8.500 2T13 2.500V9Q10 9 8 8T3 8.500Z" fill="#fff" stroke="#777" /><circle cx="11.500" cy="11" r="4.700" fill="#e02c24" /><path d="M9.500 9L13.500 13M13.500 9L9.500 13" stroke="#fff" strokeWidth="1.500" /></svg>
          </span>
          <span className="flex w-6 shrink-0 items-center">
            <svg width="16" height="14" viewBox="0 0 16 14" shapeRendering="crispEdges" fill="#fff" stroke="#777" aria-hidden="true"><path d="M0.500 10.500H2.500V12.500H0.500ZM3.500 8.500H5.500V12.500H3.500ZM6.500 6.500H8.500V12.500H6.500ZM9.500 3.500H11.500V12.500H9.500ZM12.500 0.500H15.500V12.500H12.500Z" /></svg>
          </span>
          <span className="flex w-7 shrink-0 items-center">
            <svg width="17" height="16" viewBox="0 0 17 16" fill="none" stroke="#777" aria-hidden="true"><path d="M0.500 5.500H3.500L8.500 1V15L3.500 10.500H0.500Z" fill="#fff" /><path d="M10.500 5Q12.500 8 10.500 11M12.500 3.500Q15 8 12.500 12.500M14.500 2.500Q17.500 8 14.500 13.500" /></svg>
          </span>
          <time className="flex w-[58px] flex-col text-center" dateTime="2014-03-26T23:02"><span>23:02</span><span>26.03.2014</span></time>
          <svg width="18" height="16" viewBox="0 0 18 16" aria-hidden="true" className="ml-1"><path d="M1.500 2.500H16.500V12.500H1.500Z" fill="#2468c8" stroke="#102c60" /><path d="M2 3H16L2 11Z" fill="#58a0e8" /><path d="M2 14.500H16" stroke="#88a" /></svg>
        </div>
      </div>
    </div>
  );
}
